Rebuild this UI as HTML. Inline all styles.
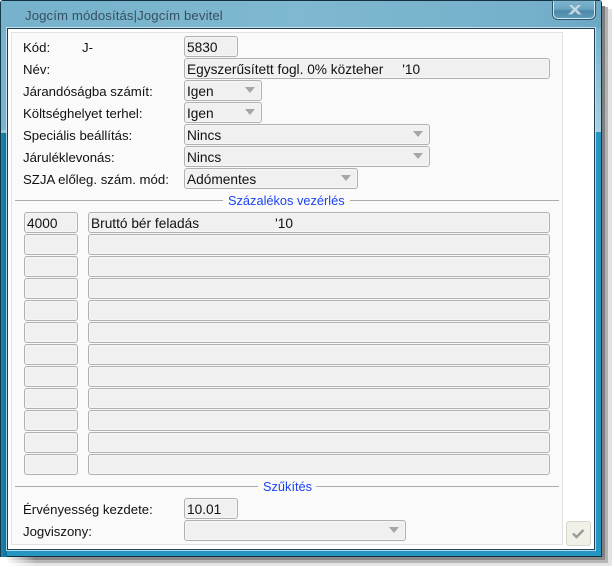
<!DOCTYPE html>
<html><head><meta charset="utf-8">
<style>
html,body{margin:0;padding:0;background:#fff}
body{width:614px;height:569px;position:relative;overflow:hidden;font-family:"Liberation Sans",sans-serif;font-size:13.2px;color:#111}
div{position:absolute;box-sizing:border-box}
.s{left:0;top:0;width:614px;height:569px;overflow:hidden}
.win{left:0;top:0;width:602px;height:557px;border:1px solid #12303f;border-left-color:#123a4c;background:linear-gradient(180deg,#77b3cd 0,#79b4ce 128px,#a9d2e2 131px,#2596c4 133px,#2596c4 100%);border-radius:3px 3px 0 0}
.left{left:0;top:132px;width:6px;height:424px;background:linear-gradient(90deg,#1a86ae,#0e6f97)}
.top{left:0;top:0;width:600px;height:27px;background:linear-gradient(90deg,#76b2cc,#7fb8d0 50%,#75afca 90%,#6aa7c3)}
.client{left:7px;top:28px;width:588px;height:522px;background:#fff;border:1px solid #1d3c4e;border-bottom-color:#24485a;box-shadow:0 0 0 1px rgba(225,240,248,.75)}
.panel{left:11px;top:32px;width:552px;height:513px;background:#fafafa;border:1px solid #e2e2e2}
.l{white-space:pre;height:16px;line-height:16px;margin-top:1px}
.f{background:#f0f0f0;border:1px solid #aeb1b3;border-radius:3px;height:21px;line-height:21px;padding-left:2px;white-space:pre;font-size:13.7px;box-shadow:inset 0 0 0 1px #f6f6f6}
.a{width:0;height:0;border-left:5.5px solid transparent;border-right:5.5px solid transparent;border-top:6px solid #a6a6a6;top:6px}
.hr{height:1px;background:#a9abad}
.b{color:#1c43f0;white-space:pre;height:16px;line-height:16px;font-size:12.8px}
</style></head><body>
<div class="s">
<div style="left:602px;top:6px;width:3px;height:555px;background:#7f7f7f"></div>
<div style="left:605px;top:7px;width:3px;height:556px;background:#b2b2b2"></div>
<div style="left:608px;top:9px;width:4px;height:556px;background:#e2e2e2"></div>
<div style="left:5px;top:557px;width:600px;height:3px;background:linear-gradient(90deg,#fff,#8a8a8a 30px)"></div>
<div style="left:6px;top:560px;width:602px;height:3px;background:linear-gradient(90deg,#fff,#b6b6b6 30px)"></div>
<div style="left:8px;top:563px;width:603px;height:3px;background:linear-gradient(90deg,#fff,#e4e4e4 30px)"></div>

<div class="win">
  <div class="top"></div>
  <div class="left"></div>
  <div style="left:0;top:132px;width:600px;height:424px"></div>
</div>
<div style="left:595px;top:132px;width:6px;height:424px;background:#2596c4"></div>
<div style="left:596px;top:28px;width:5px;height:104px;background:linear-gradient(180deg,#76b2cc,#a8d1e2)"></div>
<div style="left:553px;top:1px;width:42px;height:18px;background:linear-gradient(180deg,#7eb5cd 0,#6ba6c2 45%,#4b87a8 60%,#5f9bb9 100%);border:1px solid #d4e8f0;border-top:none;border-radius:0 0 5px 5px;box-shadow:0 0 0 1px #30566c"></div>
<svg style="position:absolute;left:566px;top:3px" width="18" height="13" viewBox="0 0 18 13"><path d="M2 1.5h4l3 3 3-3h4l-5 5 5 5h-4l-3-3-3 3H2l5-5z" fill="#c4dbe6" stroke="#7ba5bb" stroke-width=".7"/></svg>
<div class="l" style="left:25px;top:8px;margin-top:0;font-size:13.2px;color:#37505f;letter-spacing:.1px">Jogcím módosítás|Jogcím bevitel</div>

<div class="client"></div>
<div class="panel"></div>

<div class="l" style="left:23px;top:39px">Kód:</div>
<div class="l" style="left:82px;top:39px">J-</div>
<div class="f" style="left:184px;top:36px;width:54px">5830</div>

<div class="l" style="left:23px;top:61px">Név:</div>
<div class="f" style="left:184px;top:58px;width:366px">Egyszerűsített fogl. 0% közteher     '10</div>

<div class="l" style="left:23px;top:83px">Járandóságba számít:</div>
<div class="f" style="left:184px;top:80px;width:78px">Igen<div class="a" style="left:60px"></div></div>

<div class="l" style="left:23px;top:105px">Költséghelyet terhel:</div>
<div class="f" style="left:184px;top:102px;width:78px">Igen<div class="a" style="left:60px"></div></div>

<div class="l" style="left:23px;top:127px">Speciális beállítás:</div>
<div class="f" style="left:184px;top:124px;width:246px">Nincs<div class="a" style="left:228px"></div></div>

<div class="l" style="left:23px;top:149px">Járuléklevonás:</div>
<div class="f" style="left:184px;top:146px;width:246px">Nincs<div class="a" style="left:228px"></div></div>

<div class="l" style="left:23px;top:171px">SZJA előleg. szám. mód:</div>
<div class="f" style="left:184px;top:168px;width:174px">Adómentes<div class="a" style="left:156px"></div></div>

<div class="hr" style="left:15px;top:200px;width:208px"></div>
<div class="b" style="left:228px;top:193px">Százalékos vezérlés</div>
<div class="hr" style="left:350px;top:200px;width:209px"></div>

<div class="f" style="left:24px;top:212px;width:54px">4000</div><div class="f" style="left:88px;top:212px;width:462px">Bruttó bér feladás                    '10</div>
<div class="f" style="left:24px;top:234px;width:54px"></div><div class="f" style="left:88px;top:234px;width:462px"></div>
<div class="f" style="left:24px;top:256px;width:54px"></div><div class="f" style="left:88px;top:256px;width:462px"></div>
<div class="f" style="left:24px;top:278px;width:54px"></div><div class="f" style="left:88px;top:278px;width:462px"></div>
<div class="f" style="left:24px;top:300px;width:54px"></div><div class="f" style="left:88px;top:300px;width:462px"></div>
<div class="f" style="left:24px;top:322px;width:54px"></div><div class="f" style="left:88px;top:322px;width:462px"></div>
<div class="f" style="left:24px;top:344px;width:54px"></div><div class="f" style="left:88px;top:344px;width:462px"></div>
<div class="f" style="left:24px;top:366px;width:54px"></div><div class="f" style="left:88px;top:366px;width:462px"></div>
<div class="f" style="left:24px;top:388px;width:54px"></div><div class="f" style="left:88px;top:388px;width:462px"></div>
<div class="f" style="left:24px;top:410px;width:54px"></div><div class="f" style="left:88px;top:410px;width:462px"></div>
<div class="f" style="left:24px;top:432px;width:54px"></div><div class="f" style="left:88px;top:432px;width:462px"></div>
<div class="f" style="left:24px;top:454px;width:54px"></div><div class="f" style="left:88px;top:454px;width:462px"></div>

<div class="hr" style="left:15px;top:486px;width:243px"></div>
<div class="b" style="left:263px;top:479px">Szűkítés</div>
<div class="hr" style="left:316px;top:486px;width:243px"></div>

<div class="l" style="left:23px;top:501px">Érvényesség kezdete:</div>
<div class="f" style="left:184px;top:498px;width:54px">10.01</div>
<div class="l" style="left:23px;top:523px">Jogviszony:</div>
<div class="f" style="left:184px;top:520px;width:222px"><div class="a" style="left:204px"></div></div>

<div style="left:566px;top:521px;width:25px;height:25px;background:#f2f1e7;border:1px solid #d6d6c8;border-radius:3px"></div>
<svg style="position:absolute;left:570px;top:526px" width="17" height="15" viewBox="0 0 17 15"><path d="M3 7.5l3.5 3.5L13.5 4" fill="none" stroke="#9a9a96" stroke-width="2.4"/></svg>
</div>
</body></html>
